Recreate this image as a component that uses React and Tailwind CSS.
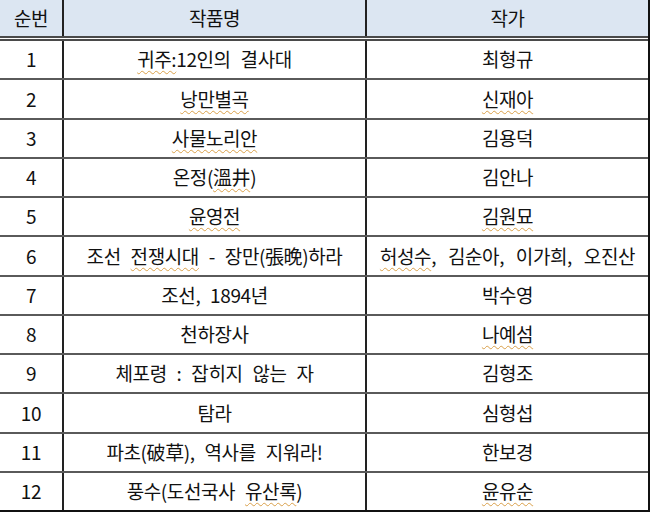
import React from 'react'

const rows = [
  { no: '1', title: [{ t: '귀주:', u: true }, { t: '12인의 결사대' }], author: [{ t: '최형규' }] },
  { no: '2', title: [{ t: '낭만별곡', u: true }], author: [{ t: '신재아', u: true }] },
  { no: '3', title: [{ t: '사물노리안', u: true }], author: [{ t: '김용덕' }] },
  { no: '4', title: [{ t: '온정(' }, { t: '溫井', u: true }, { t: ')' }], author: [{ t: '김안나' }] },
  { no: '5', title: [{ t: '윤영전', u: true }], author: [{ t: '김원묘', u: true }] },
  {
    no: '6',
    title: [{ t: '조선 ' }, { t: '전쟁시대', u: true }, { t: ' - 장만(張晩)하라' }],
    author: [{ t: '허성수', u: true }, { t: ', 김순아, 이가희, 오진산' }],
  },
  { no: '7', title: [{ t: '조선, 1894년' }], author: [{ t: '박수영' }] },
  { no: '8', title: [{ t: '천하장사' }], author: [{ t: '나예섬', u: true }] },
  { no: '9', title: [{ t: '체포령 : 잡히지 않는 자' }], author: [{ t: '김형조' }] },
  { no: '10', title: [{ t: '탐라' }], author: [{ t: '심형섭' }] },
  { no: '11', title: [{ t: '파초(破草), 역사를 지워라!' }], author: [{ t: '한보경' }] },
  { no: '12', title: [{ t: '풍수(도선국사 ' }, { t: '유산록', u: true }, { t: ')' }], author: [{ t: '윤유순', u: true }] },
]

// spell-check squiggle under some words
const Text = ({ parts }) => (
  <span className="whitespace-pre">
    {parts.map((p, i) =>
      p.u ? (
        <span key={i} className="underline decoration-wavy decoration-[#d9a04a] decoration-1 underline-offset-[3px]">
          {p.t}
        </span>
      ) : (
        <span key={i}>{p.t}</span>
      )
    )}
  </span>
)

export default function App() {
  return (
    <div className="w-[650px] h-[512px] bg-white font-['Noto_Sans_CJK_KR',sans-serif] text-[19px] tracking-[-0.4px] text-[#111] flex flex-col border-r-2 border-b-2 border-r-[#111] border-b-[#111]">
      {/* header */}
      <div className="h-[41px] flex bg-[#dce6f2] bg-clip-padding border-b-[5px] border-double border-[#4a4a4a]">
        <div className="w-[64px] flex items-center justify-center border-r-2 border-[#222]">순번</div>
        <div className="w-[303px] flex items-center justify-center border-r-2 border-[#222]">작품명</div>
        <div className="flex-1 flex items-center justify-center">작가</div>
      </div>

      {rows.map((row, i) => (
        <div
          key={row.no}
          className={
            'flex-1 flex ' + (i < rows.length - 1 ? 'border-b-2 border-[#5a5a5a]' : '')
          }
        >
          <div className="w-[64px] flex items-center justify-center border-r-2 border-[#222]">{row.no}</div>
          <div className="w-[303px] flex items-center justify-center border-r-2 border-[#222] [word-spacing:6px]">
            <Text parts={row.title} />
          </div>
          <div className="flex-1 flex items-center justify-center [word-spacing:8px]">
            <Text parts={row.author} />
          </div>
        </div>
      ))}
    </div>
  )
}
